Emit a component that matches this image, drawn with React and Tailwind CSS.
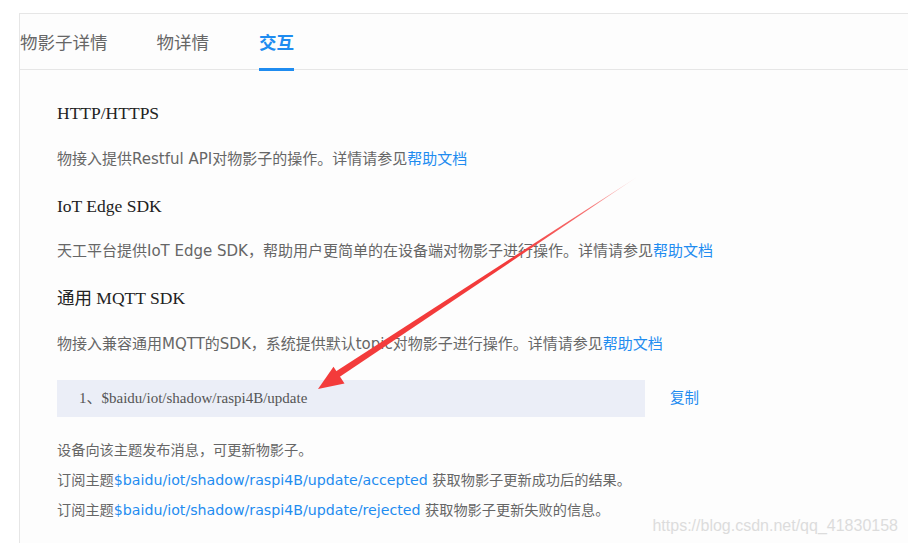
import React from 'react';

const SANS = { fontFamily: '"DejaVu Sans", "Noto Sans CJK SC", sans-serif' };
const SERIF = { fontFamily: '"Liberation Serif", "Noto Sans CJK SC", serif' };

const tabs = ['物影子详情', '物详情', '交互'];

function Link({ children }) {
  return <span className="text-[#1f8cf0]">{children}</span>;
}

function Heading({ children, className = '' }) {
  return (
    <h3 className={`text-[17.5px] leading-[24px] text-[#222] font-normal ${className}`} style={SERIF}>
      {children}
    </h3>
  );
}

function Para({ children, className = '' }) {
  return <p className={`text-[15px] leading-[24px] text-[#666] ${className}`}>{children}</p>;
}

function Arrow() {
  // tip (318,389), tail (637,177)
  return (
    <svg className="absolute inset-0 pointer-events-none" width="908" height="543" viewBox="0 0 908 543">
      <defs>
        <linearGradient id="fade" gradientUnits="userSpaceOnUse" x1="637" y1="177" x2="330" y2="381">
          <stop offset="0" stopColor="#f33b3b" stopOpacity="0.15" />
          <stop offset="0.15" stopColor="#f33b3b" stopOpacity="0.7" />
          <stop offset="0.4" stopColor="#f33b3b" stopOpacity="1" />
          <stop offset="1" stopColor="#f33b3b" stopOpacity="1" />
        </linearGradient>
      </defs>
      <polygon points="637,177 337.2,378.6 333.4,373.0" fill="url(#fade)" />
      <polygon points="318,389 344.5,383.5 333.5,366.8" fill="#f33b3b" />
    </svg>
  );
}

export default function App() {
  return (
    <div className="relative w-[908px] h-[543px] overflow-hidden bg-white pt-[13px] pl-[19px]" style={SANS}>
      <div className="h-full border-l border-t border-[#e6e6e6] bg-[#fdfdfd]">
        {/* tab bar */}
        <div className="flex h-[56px] border-b border-[#e6e6e6]">
          {tabs.map((t, i) => (
            <div
              key={t}
              className={`relative flex items-center pt-[4px] text-[17.5px] ${
                i === 2 ? 'text-[#1f8cf0] font-bold' : 'text-[#666]'
              } ${i === 0 ? 'ml-0 mr-[49px]' : i === 1 ? 'mr-[50px]' : ''}`}
            >
              {t}
              {i === 2 && <span className="absolute left-0 right-0 bottom-[-2px] h-[3px] bg-[#1f8cf0]" />}
            </div>
          ))}
        </div>

        {/* content */}
        <div className="pl-[37px]">
          <Heading className="mt-[31px]">HTTP/HTTPS</Heading>
          <Para className="mt-[22px]">
            物接入提供Restful API对物影子的操作。详情请参见<Link>帮助文档</Link>
          </Para>

          <Heading className="mt-[23px]">IoT Edge SDK</Heading>
          <Para className="mt-[21px]">
            天工平台提供IoT Edge SDK，帮助用户更简单的在设备端对物影子进行操作。详情请参见<Link>帮助文档</Link>
          </Para>

          <Heading className="mt-[23px]">通用 MQTT SDK</Heading>
          <Para className="mt-[22px]">
            物接入兼容通用MQTT的SDK，系统提供默认topic对物影子进行操作。详情请参见<Link>帮助文档</Link>
          </Para>

          <div className="mt-[24px] flex items-center">
            <div className="flex h-[37px] w-[588px] items-center bg-[#ebeef7] pl-[22px] text-[15px] text-[#555]" style={SERIF}>
              1、$baidu/iot/shadow/raspi4B/update
            </div>
            <span className="ml-[25px] text-[14.5px] text-[#1f8cf0]">复制</span>
          </div>

          <div className="mt-[18px] text-[14.2px] leading-[30px] text-[#666]">
            <p>设备向该主题发布消息，可更新物影子。</p>
            <p>
              订阅主题<Link>$baidu/iot/shadow/raspi4B/update/accepted</Link> 获取物影子更新成功后的结果。
            </p>
            <p>
              订阅主题<Link>$baidu/iot/shadow/raspi4B/update/rejected</Link> 获取物影子更新失败的信息。
            </p>
          </div>
        </div>
      </div>

      <Arrow />

      <div
        className="absolute right-[10px] top-[514px] text-[16px] text-[#dcdcdc]"
        style={{ fontFamily: '"Liberation Sans", Arial, sans-serif' }}
      >
        https://blog.csdn.net/qq_41830158
      </div>
    </div>
  );
}
